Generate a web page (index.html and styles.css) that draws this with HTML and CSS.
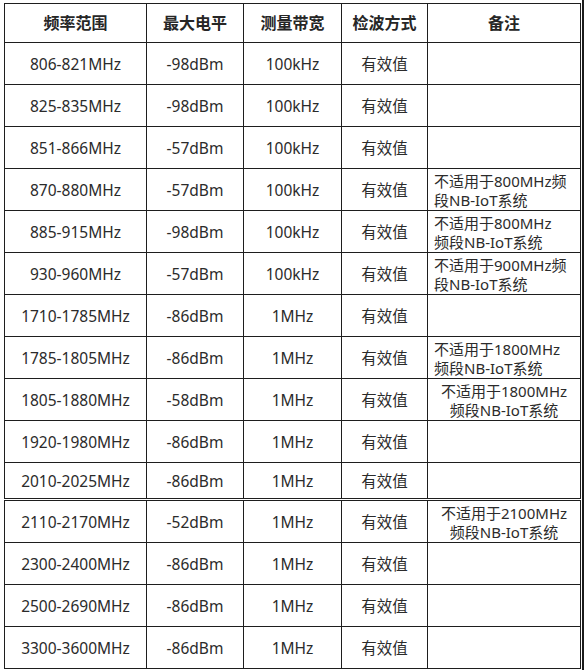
FILE: index.html
```html
<!DOCTYPE html>
<html lang="zh-CN">
<head>
<meta charset="utf-8">
<title>频率范围</title>
<link rel="stylesheet" href="styles.css">
</head>
<body>
<div class="page">
<table class="spec">
<colgroup>
<col class="c1"><col class="c2"><col class="c3"><col class="c4"><col class="c5">
</colgroup>
<thead>
<tr><th>频率范围</th><th>最大电平</th><th>测量带宽</th><th>检波方式</th><th>备注</th></tr>
</thead>
<tbody>
<tr><td>806-821MHz</td><td>-98dBm</td><td>100kHz</td><td>有效值</td><td class="note"></td></tr>
<tr><td>825-835MHz</td><td>-98dBm</td><td>100kHz</td><td>有效值</td><td class="note"></td></tr>
<tr><td>851-866MHz</td><td>-57dBm</td><td>100kHz</td><td>有效值</td><td class="note"></td></tr>
<tr><td>870-880MHz</td><td>-57dBm</td><td>100kHz</td><td>有效值</td><td class="note">不适用于800MHz频<br>段NB-IoT系统</td></tr>
<tr><td>885-915MHz</td><td>-98dBm</td><td>100kHz</td><td>有效值</td><td class="note">不适用于800MHz<br>频段NB-IoT系统</td></tr>
<tr><td>930-960MHz</td><td>-57dBm</td><td>100kHz</td><td>有效值</td><td class="note">不适用于900MHz频<br>段NB-IoT系统</td></tr>
<tr><td>1710-1785MHz</td><td>-86dBm</td><td>1MHz</td><td>有效值</td><td class="note"></td></tr>
<tr><td>1785-1805MHz</td><td>-86dBm</td><td>1MHz</td><td>有效值</td><td class="note">不适用于1800MHz<br>频段NB-IoT系统</td></tr>
<tr><td>1805-1880MHz</td><td>-58dBm</td><td>1MHz</td><td>有效值</td><td class="note centered">不适用于1800MHz<br>频段NB-IoT系统</td></tr>
<tr><td>1920-1980MHz</td><td>-86dBm</td><td>1MHz</td><td>有效值</td><td class="note"></td></tr>
<tr class="seam"><td>2010-2025MHz</td><td>-86dBm</td><td>1MHz</td><td>有效值</td><td class="note"></td></tr>
<tr><td>2110-2170MHz</td><td>-52dBm</td><td>1MHz</td><td>有效值</td><td class="note centered">不适用于2100MHz<br>频段NB-IoT系统</td></tr>
<tr><td>2300-2400MHz</td><td>-86dBm</td><td>1MHz</td><td>有效值</td><td class="note"></td></tr>
<tr><td>2500-2690MHz</td><td>-86dBm</td><td>1MHz</td><td>有效值</td><td class="note"></td></tr>
<tr><td>3300-3600MHz</td><td>-86dBm</td><td>1MHz</td><td>有效值</td><td class="note"></td></tr>
</tbody>
</table>
</div>
</body>
</html>
```

FILE: styles.css
```css
html, body {
  margin: 0;
  padding: 0;
  background: #ffffff;
}

.page {
  box-sizing: border-box;
  width: 584px;
  height: 670px;
  padding: 3px 0 0 4px;
  border-right: 2px solid #1c1c1c;
  overflow: hidden;
}

.spec {
  border-collapse: collapse;
  table-layout: fixed;
  width: 576px;
  font-family: "Noto Sans", "Noto Sans CJK SC", sans-serif;
  font-size: 15.5px;
  color: #2b2b2b;
}

.c1 { width: 142px; }
.c2 { width: 97px; }
.c3 { width: 98px; }
.c4 { width: 86px; }
.c5 { width: 153px; }

.spec th,
.spec td {
  border: 1px solid #1e1e1e;
  padding: 0;
  text-align: center;
  vertical-align: middle;
  line-height: 20px;
  box-sizing: border-box;
}

.spec th {
  height: 39px;
  font-size: 16px;
  font-weight: bold;
  color: #262626;
}

.spec td {
  height: 42px;
}

.spec td.note {
  font-size: 15px;
  line-height: 19px;
  text-align: left;
  padding: 3px 0 0 6px;
  white-space: nowrap;
}

.spec td.note.centered {
  text-align: center;
  padding-left: 0;
}

.spec tr.seam td {
  height: 37px;
  border-bottom: 3px double #1e1e1e;
}
```
